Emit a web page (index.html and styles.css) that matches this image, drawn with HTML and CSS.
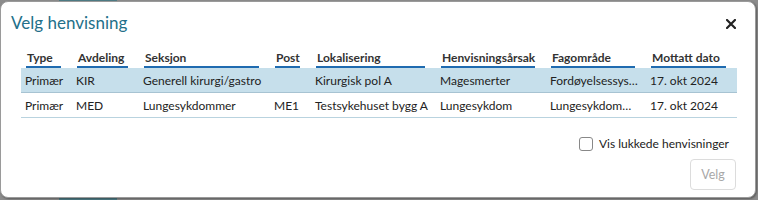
FILE: index.html
```html
<!DOCTYPE html>
<html lang="no">
<head>
    <meta charset="UTF-8">
    <title>Velg henvisning</title>
    <link rel="stylesheet" href="styles.css">
</head>
<body>
    <div class="backdrop-tab"></div>
    <div class="dialog">
        <div class="dialog-header">
            <h1 class="dialog-title">Velg henvisning</h1>
            <button class="close-btn" aria-label="Lukk">
                <svg width="10" height="10" viewBox="0 0 10 10">
                    <path d="M1 1 L9 9 M9 1 L1 9" stroke="#222" stroke-width="2.2" stroke-linecap="square"/>
                </svg>
            </button>
        </div>

        <table class="ref-table">
            <colgroup>
                <col style="width:51px">
                <col style="width:67px">
                <col style="width:131px">
                <col style="width:41px">
                <col style="width:125px">
                <col style="width:110px">
                <col style="width:100px">
                <col style="width:91px">
            </colgroup>
            <thead>
                <tr>
                    <th><span>Type</span></th>
                    <th><span>Avdeling</span></th>
                    <th><span>Seksjon</span></th>
                    <th><span>Post</span></th>
                    <th><span>Lokalisering</span></th>
                    <th><span>Henvisningsårsak</span></th>
                    <th><span>Fagområde</span></th>
                    <th><span>Mottatt dato</span></th>
                </tr>
            </thead>
            <tbody>
                <tr class="selected">
                    <td>Primær</td>
                    <td>KIR</td>
                    <td>Generell kirurgi/gastro</td>
                    <td></td>
                    <td>Kirurgisk pol A</td>
                    <td>Magesmerter</td>
                    <td>Fordøyelsessystemet</td>
                    <td>17. okt 2024</td>
                </tr>
                <tr>
                    <td>Primær</td>
                    <td>MED</td>
                    <td>Lungesykdommer</td>
                    <td>ME1</td>
                    <td>Testsykehuset bygg A</td>
                    <td>Lungesykdom</td>
                    <td>Lungesykdommer</td>
                    <td>17. okt 2024</td>
                </tr>
            </tbody>
        </table>

        <div class="dialog-footer">
            <label class="check">
                <input type="checkbox">
                <span class="box"></span>
                Vis lukkede henvisninger
            </label>
            <button class="select-btn" disabled>Velg</button>
        </div>
    </div>
</body>
</html>
```

FILE: styles.css
```css
body {
    margin: 0;
    width: 758px;
    height: 200px;
    background: #8c8c8c;
    font-family: Lato, "Open Sans", sans-serif;
    color: #222;
    position: relative;
    overflow: hidden;
}
.backdrop-tab {
    position: absolute;
    left: 59px;
    top: 0;
    width: 58px;
    height: 200px;
    background: #4f7c86;
}
.dialog {
    position: relative;
    margin: 1px 2px 0 0;
    height: 197px;
    box-sizing: border-box;
    background: #fff;
    border: 1px solid #9a9a9a;
    border-radius: 8px;
    box-shadow: 1px 1px 2px rgba(0, 0, 0, 0.35);
    padding: 0 20px;
}
.dialog-header {
    display: flex;
    align-items: center;
    justify-content: space-between;
    height: 40px;
}
.dialog-title {
    margin: 0 0 0 -10px;
    font-size: 17px;
    font-weight: normal;
    color: #23708a;
}
.close-btn {
    border: none;
    background: none;
    padding: 0;
    margin-right: -2px;
    margin-top: 4px;
    width: 12px;
    height: 12px;
    display: flex;
    align-items: center;
    justify-content: center;
}
.ref-table {
    table-layout: fixed;
    border-collapse: collapse;
    width: 716px;
    margin-top: 7px;
    font-size: 12px;
}
.ref-table th {
    text-align: left;
    font-weight: bold;
    color: #333;
    padding: 0 11px 0 5px;
    height: 19px;
    vertical-align: top;
}
.ref-table th span {
    display: block;
    border-bottom: 2px solid #1f6bb0;
    padding: 1px 0 1px 1px;
    line-height: 15px;
    white-space: nowrap;
}
.ref-table td {
    padding: 0 8px 0 4px;
    height: 24px;
    white-space: nowrap;
    overflow: hidden;
    text-overflow: ellipsis;
    border-bottom: 1px solid #b9d3df;
}
.ref-table tr.selected td {
    background: #c6dfeb;
    border-bottom-color: #a7c3d2;
}
.dialog-footer {
    display: flex;
    flex-direction: column;
    align-items: flex-end;
    margin-top: 18px;
}
.check {
    display: flex;
    align-items: center;
    font-size: 12px;
    color: #222;
    margin-right: 6px;
}
.check input {
    display: none;
}
.check .box {
    width: 12px;
    height: 12px;
    border: 1px solid #888;
    border-radius: 3px;
    margin-right: 6px;
}
.select-btn {
    margin-top: 8px;
    margin-right: -1px;
    width: 46px;
    height: 31px;
    border: 1px solid #dcdcdc;
    border-radius: 4px;
    background: #fff;
    color: #a8a8a8;
    font-family: inherit;
    font-size: 12.5px;
}
```
